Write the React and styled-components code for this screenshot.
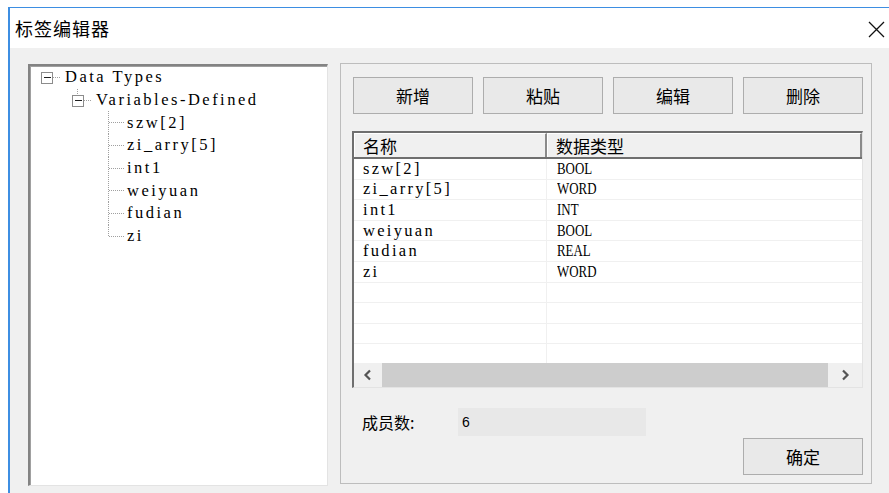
import React from "react";
import styled, { createGlobalStyle } from "styled-components";

const GlobalStyle = createGlobalStyle`
	html, body {
		margin: 0;
		padding: 0;
		background: #ffffff;
		overflow: hidden;
	}
	* {
		box-sizing: border-box;
	}
`;

const CJK = `"Noto Sans CJK SC", "Noto Sans", sans-serif`;
const SONG = `"Liberation Serif", "Noto Sans CJK SC", serif`;
const ROW_H = 22.7;

const treeItems = [
	{ label: "Data Types", level: 0, kind: "box" },
	{ label: "Variables-Defined", level: 1, kind: "box" },
	{ label: "szw[2]", level: 2, kind: "leaf" },
	{ label: "zi_arry[5]", level: 2, kind: "leaf" },
	{ label: "int1", level: 2, kind: "leaf" },
	{ label: "weiyuan", level: 2, kind: "leaf" },
	{ label: "fudian", level: 2, kind: "leaf" },
	{ label: "zi", level: 2, kind: "leaf", last: true },
];

const tags = [
	{ name: "szw[2]", type: "BOOL" },
	{ name: "zi_arry[5]", type: "WORD" },
	{ name: "int1", type: "INT" },
	{ name: "weiyuan", type: "BOOL" },
	{ name: "fudian", type: "REAL" },
	{ name: "zi", type: "WORD" },
	{ name: "", type: "" },
	{ name: "", type: "" },
	{ name: "", type: "" },
	{ name: "", type: "" },
];

const Connector = ({ level, kind, last }) => {
	const cx = 16.5 + 31 * level;
	const cy = 11.5;
	const w = 32 + 31 * level;
	const dot = { stroke: "#a0a0a0", strokeWidth: 1, strokeDasharray: "1 1" };
	return (
		<svg width={w} height={ROW_H} shapeRendering="crispEdges" style={{ flex: "none", overflow: "visible" }}>
			{kind === "box" ? (
				<>
					{level > 0 && <line x1={cx} y1={0} x2={cx} y2={cy - 6} {...dot} />}
					<rect x={cx - 5.5} y={cy - 5.5} width={11} height={11} fill="#fff" stroke="#8c8c8c" />
					<line x1={cx - 3} y1={cy} x2={cx + 4} y2={cy} stroke="#202020" />
					<line x1={cx + 6} y1={cy} x2={cx + 13} y2={cy} {...dot} />
				</>
			) : (
				<>
					<line x1={cx} y1={0} x2={cx} y2={last ? cy : ROW_H + 1} {...dot} />
					<line x1={cx} y1={cy} x2={cx + 15} y2={cy} {...dot} />
				</>
			)}
		</svg>
	);
};

const Chevron = ({ dir }) => (
	<svg width="10" height="12" viewBox="0 0 10 12">
		<polyline
			points={dir === "left" ? "7,1.5 2.5,6 7,10.5" : "3,1.5 7.5,6 3,10.5"}
			fill="none"
			stroke="#555"
			strokeWidth="2.2"
		/>
	</svg>
);

const App = () => {
	return (
		<>
			<GlobalStyle />
			<Page>
				<Window>
					<TitleBar>
						<Title>标签编辑器</Title>
						<CloseButton>
							<svg width="17" height="17" viewBox="0 0 17 17">
								<path d="M1 1 L16 16 M16 1 L1 16" stroke="#111" strokeWidth="1.3" />
							</svg>
						</CloseButton>
					</TitleBar>
					<Body>
						<TreePanel>
							{treeItems.map((item) => (
								<TreeRow key={item.label}>
									<Connector level={item.level} kind={item.kind} last={item.last} />
									<TreeLabel>{item.label}</TreeLabel>
								</TreeRow>
							))}
						</TreePanel>
						<GroupBox>
							<ButtonRow>
								<Button>新增</Button>
								<Button>粘贴</Button>
								<Button>编辑</Button>
								<Button>删除</Button>
							</ButtonRow>
							<ListView>
								<HeaderRow>
									<HeaderCell $width={193}>名称</HeaderCell>
									<HeaderCell>数据类型</HeaderCell>
								</HeaderRow>
								<Rows>
									{tags.map((tag, i) => (
										<Row key={i}>
											<Cell $width={193}>{tag.name}</Cell>
											<Cell $caps>
												<CapsText>{tag.type}</CapsText>
											</Cell>
										</Row>
									))}
								</Rows>
								<ScrollBar>
									<ArrowBox $width={28}>
										<Chevron dir="left" />
									</ArrowBox>
									<Track>
										<Thumb />
									</Track>
									<ArrowBox $width={34}>
										<Chevron dir="right" />
									</ArrowBox>
								</ScrollBar>
							</ListView>
							<InfoRow>
								<InfoLabel>成员数:</InfoLabel>
								<ReadOnlyField>6</ReadOnlyField>
							</InfoRow>
							<Footer>
								<Button>确定</Button>
							</Footer>
						</GroupBox>
					</Body>
				</Window>
			</Page>
		</>
	);
};

export default App;

const Page = styled.div`
	width: 889px;
	height: 493px;
	padding: 7px 0 0 8px;
	background: #ffffff;
`;

const Window = styled.div`
	height: 486px;
	border-top: 1px solid #3d8ee2;
	border-left: 2px solid #3d8ee2;
	background: #f0f0f0;
	display: flex;
	flex-direction: column;
`;

const TitleBar = styled.div`
	height: 40px;
	flex: none;
	background: #ffffff;
	display: flex;
	align-items: center;
	justify-content: space-between;
	padding: 0 4px 0 5px;
`;

const Title = styled.div`
	font-family: ${CJK};
	font-size: 18px;
	color: #000;
	letter-spacing: 1px;
`;

const CloseButton = styled.div`
	width: 17px;
	height: 17px;
	display: flex;
	margin-top: 2px;
`;

const Body = styled.div`
	flex: 1;
	display: flex;
	align-items: flex-start;
	gap: 12px;
	padding: 16px 0 0 18px;
`;

const TreePanel = styled.div`
	width: 300px;
	height: 422px;
	background: #ffffff;
	border-top: 2px solid #838383;
	border-left: 2px solid #838383;
	border-right: 1px solid #e3e3e3;
	border-bottom: 1px solid #e3e3e3;
	box-shadow: inset 1px 1px 0 #a0a0a0;
`;

const TreeRow = styled.div`
	height: ${ROW_H}px;
	display: flex;
	align-items: center;
`;

const TreeLabel = styled.span`
	font-family: ${SONG};
	font-size: 16.5px;
	letter-spacing: 2.5px;
	color: #000;
	margin-left: 3px;
	white-space: pre;
`;

const GroupBox = styled.div`
	width: 532px;
	height: 421px;
	margin-top: -1px;
	border: 1px solid #bdbdbd;
	padding: 13px 8px 0 12px;
	display: flex;
	flex-direction: column;
`;

const ButtonRow = styled.div`
	display: flex;
	gap: 10px;
`;

const Button = styled.div`
	width: 120px;
	height: 37px;
	border: 1px solid #adadad;
	background: #e9e9e9;
	display: flex;
	align-items: center;
	justify-content: center;
	font-family: ${CJK};
	font-size: 17px;
	color: #000;
`;

const ListView = styled.div`
	margin: 17px 0 0 -1px;
	width: 511px;
	height: 257px;
	background: #ffffff;
	border-top: 2px solid #6f6f6f;
	border-left: 2px solid #6f6f6f;
	border-right: 1px solid #e3e3e3;
	border-bottom: 1px solid #e3e3e3;
	display: flex;
	flex-direction: column;
	overflow: hidden;
`;

const HeaderRow = styled.div`
	height: 26px;
	flex: none;
	display: flex;
	background: #f0f0f0;
	border-bottom: 2px solid #6f6f6f;
`;

const HeaderCell = styled.div`
	${(p) => (p.$width ? `width: ${p.$width}px; flex: none;` : "flex: 1;")}
	height: 100%;
	display: flex;
	align-items: center;
	padding-left: 8px;
	border-top: 1px solid #ffffff;
	border-left: 1px solid #ffffff;
	border-right: 2px solid #8a8a8a;
	font-family: ${CJK};
	font-size: 17px;
	color: #000;
`;

const Rows = styled.div`
	flex: 1;
	overflow: hidden;
`;

const Row = styled.div`
	height: 20.6px;
	display: flex;
	border-bottom: 1px solid #f0f0f0;
`;

const Cell = styled.div`
	${(p) => (p.$width ? `width: ${p.$width}px; flex: none; border-right: 1px solid #f0f0f0;` : "flex: 1;")}
	display: flex;
	align-items: center;
	padding-left: ${(p) => (p.$caps ? 10 : 9)}px;
	font-family: ${SONG};
	font-size: 16.5px;
	letter-spacing: ${(p) => (p.$caps ? 0 : 2.3)}px;
	color: #000;
	white-space: pre;
`;

const CapsText = styled.span`
	display: inline-block;
	font-size: 17px;
	transform: scaleX(0.76);
	transform-origin: left center;
`;

const ScrollBar = styled.div`
	height: 24px;
	flex: none;
	display: flex;
	background: #f0f0f0;
`;

const ArrowBox = styled.div`
	width: ${(p) => p.$width}px;
	display: flex;
	align-items: center;
	justify-content: center;
`;

const Track = styled.div`
	flex: 1;
	display: flex;
`;

const Thumb = styled.div`
	flex: 1;
	background: #cdcdcd;
`;

const InfoRow = styled.div`
	margin-top: 20px;
	height: 28px;
	display: flex;
	align-items: center;
	padding-left: 9px;
`;

const InfoLabel = styled.span`
	width: 96px;
	font-family: ${CJK};
	font-size: 16px;
	color: #000;
`;

const ReadOnlyField = styled.div`
	width: 188px;
	height: 28px;
	background: #e8e8e8;
	display: flex;
	align-items: center;
	padding-left: 4px;
	font-family: "Liberation Sans", sans-serif;
	font-size: 14px;
	color: #000;
`;

const Footer = styled.div`
	margin-top: 2px;
	display: flex;
	justify-content: flex-end;
`;
